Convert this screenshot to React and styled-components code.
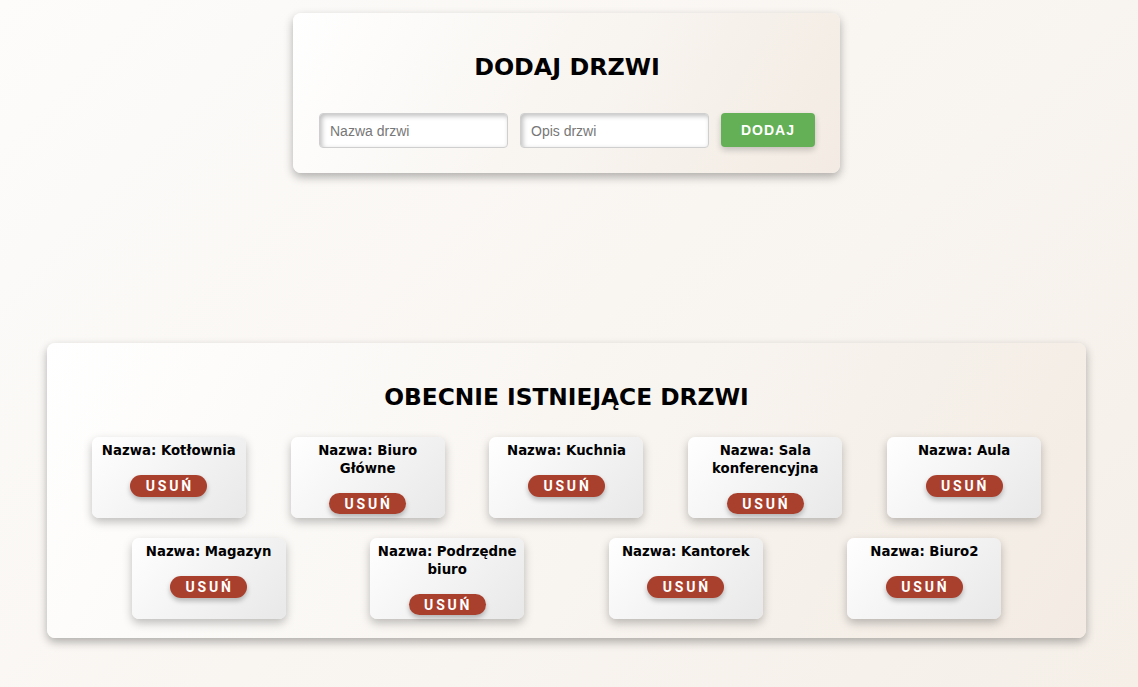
import React, { useState } from 'react'
import styled, { createGlobalStyle } from 'styled-components'

const GlobalStyle = createGlobalStyle`
    html, body{
        margin: 0;
        padding: 0;
    }
    body{
        min-height: 100vh;
        background: linear-gradient(135deg, #fdfcfb 0%, #f5efe8 100%);
        font-family: "Open Sans", "DejaVu Sans", sans-serif;
    }
`;

const doorsStart = [
    'Kotłownia',
    'Biuro Główne',
    'Kuchnia',
    'Sala konferencyjna',
    'Aula',
    'Magazyn',
    'Podrzędne biuro',
    'Kantorek',
    'Biuro2',
]

function chunk(list, size) {
    const rows = []
    for (let i = 0; i < list.length; i += size) rows.push(list.slice(i, i + size))
    return rows
}

function App() {
    const [doors, setDoors] = useState(doorsStart)

    return (
        <Page>
            <GlobalStyle />
            <AddPanel>
                <Title $size="23.8px">DODAJ DRZWI</Title>
                <Form onSubmit={e => e.preventDefault()}>
                    <Input placeholder="Nazwa drzwi" />
                    <Input placeholder="Opis drzwi" />
                    <AddButton type="submit">DODAJ</AddButton>
                </Form>
            </AddPanel>
            <ListPanel>
                <Title $size="23.3px">OBECNIE ISTNIEJĄCE DRZWI</Title>
                <Rows>
                    {chunk(doors, 5).map((row, r) => (
                        <Row key={r}>
                            {row.map(name => (
                                <DoorCard key={name}>
                                    <DoorName>Nazwa: {name}</DoorName>
                                    <RemoveButton onClick={() => setDoors(doors.filter(d => d !== name))}>
                                        USUŃ
                                    </RemoveButton>
                                </DoorCard>
                            ))}
                        </Row>
                    ))}
                </Rows>
            </ListPanel>
        </Page>
    )
}

const Page = styled.div`
    padding: 13px 52px 40px 47px;
    display: flex;
    flex-direction: column;
    align-items: center;
`;

const Panel = styled.section`
    background: linear-gradient(120deg, #ffffff 0%, #f9f6f2 45%, #f3ebe3 100%);
    border-radius: 8px;
    box-shadow: 0 4px 10px rgba(0, 0, 0, 0.3);
    box-sizing: border-box;
`;

const AddPanel = styled(Panel)`
    width: 547px;
    padding: 38px 25px 25px 26px;
`;

const ListPanel = styled(Panel)`
    width: 100%;
    margin-top: 170px;
    padding: 38px 0 19px;
`;

const Title = styled.h2`
    margin: 0 0 30px;
    text-align: center;
    font-family: "DejaVu Sans", sans-serif;
    font-size: ${p => p.$size || '23.5px'};
    line-height: 32px;
    font-weight: 700;
    color: #000;
`;

const Form = styled.form`
    display: flex;
    gap: 12px;
`;

const Input = styled.input`
    width: 189px;
    height: 35px;
    box-sizing: border-box;
    padding: 0 10px;
    border: 1px solid #cfcfcf;
    border-radius: 4px;
    background: #fff;
    box-shadow: inset 2px 2px 5px rgba(0, 0, 0, 0.25);
    font-family: "Liberation Sans", Arial, sans-serif;
    font-size: 14px;
    color: #333;
    outline: none;
    &::placeholder{
        color: #777;
    }
`;

const AddButton = styled.button`
    width: 94px;
    height: 34px;
    border: none;
    border-radius: 4px;
    background: #63b056;
    color: #fff;
    font-family: "Liberation Sans", Arial, sans-serif;
    font-size: 14px;
    font-weight: 700;
    letter-spacing: 1px;
    box-shadow: 0 3px 6px rgba(0, 0, 0, 0.2);
    cursor: pointer;
`;

const Rows = styled.div`
    display: flex;
    flex-direction: column;
    gap: 20px;
    margin-top: -6px;
`;

const Row = styled.div`
    display: flex;
    justify-content: space-evenly;
`;

const DoorCard = styled.div`
    width: 154px;
    height: 81px;
    box-sizing: border-box;
    padding: 5px 5px 4px;
    display: flex;
    flex-direction: column;
    align-items: center;
    background: linear-gradient(135deg, #ffffff 0%, #e8e8e8 100%);
    border-radius: 7px;
    box-shadow: 0 4px 10px rgba(0, 0, 0, 0.25);
`;

const DoorName = styled.h3`
    margin: 0 0 15px;
    text-align: center;
    font-family: "DejaVu Sans", sans-serif;
    font-size: 13.3px;
    line-height: 18px;
    font-weight: 700;
    color: #000;
`;

const RemoveButton = styled.button`
    width: 77px;
    height: 22px;
    padding: 0 0 0 2px;
    border: none;
    border-radius: 11px;
    background: #a9402e;
    color: #fff;
    font-family: Roboto, "Liberation Sans", sans-serif;
    font-size: 14px;
    font-weight: 700;
    letter-spacing: 2.8px;
    box-shadow: 0 3px 5px rgba(0, 0, 0, 0.25);
    cursor: pointer;
`;

export default App
